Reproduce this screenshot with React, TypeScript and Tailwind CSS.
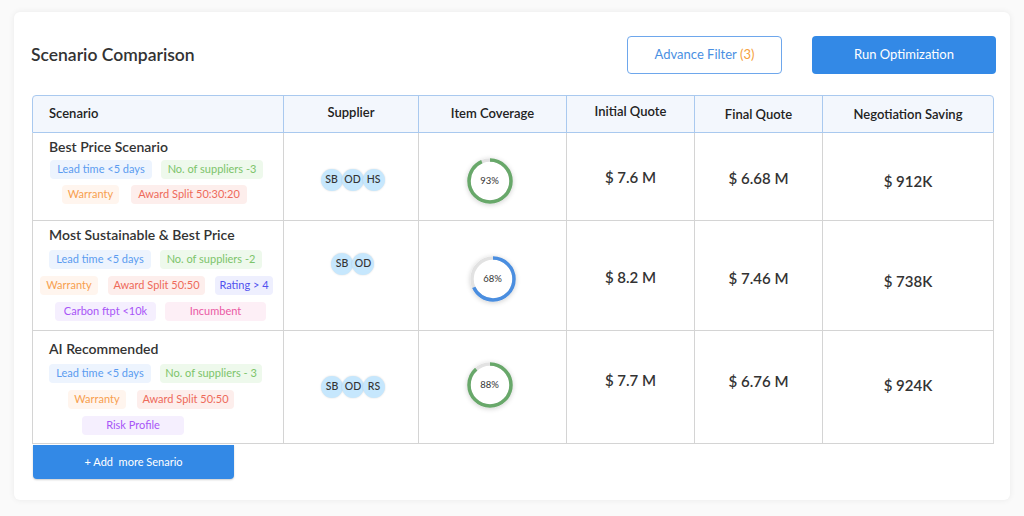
import React from "react";

type Tone = "blue" | "green" | "orange" | "red" | "indigo" | "purple" | "pink";

const toneCls: Record<Tone, string> = {
  blue: "bg-[#edf4fe] text-[#5b9cf0]",
  green: "bg-[#eef9ec] text-[#7cc46a]",
  orange: "bg-[#fff5ee] text-[#f7a04e]",
  red: "bg-[#fdeeec] text-[#ee6a5a]",
  indigo: "bg-[#eeeffe] text-[#5252ee]",
  purple: "bg-[#f5effe] text-[#a855f7]",
  pink: "bg-[#fdeff6] text-[#ea5aa4]",
};

type TagT = { t: string; tone: Tone; w: number };
type Line = { ml: number; gap: number; tags: TagT[] };

type Row = {
  title: string;
  h: number;
  titlePt: number;
  lineGap: number;
  firstGap: number;
  lines: Line[];
  sup: string[];
  supPt: number;
  supMl: number;
  pct: number;
  color: string;
  donutPt: number;
  donutMl: number;
  vals: string[];
  valPt: number[];
};

const rows: Row[] = [
  {
    title: "Best Price Scenario",
    h: 88,
    titlePt: 5,
    firstGap: 4,
    lineGap: 6,
    lines: [
      { ml: 17, gap: 9, tags: [{ t: "Lead time <5 days", tone: "blue", w: 102 }, { t: "No. of suppliers -3", tone: "green", w: 102 }] },
      { ml: 29, gap: 12, tags: [{ t: "Warranty", tone: "orange", w: 57 }, { t: "Award Split 50:30:20", tone: "red", w: 116 }] },
    ],
    sup: ["SB", "OD", "HS"],
    supPt: 36,
    supMl: 3,
    pct: 93,
    color: "#68a86a",
    donutPt: 25,
    donutMl: -6,
    vals: ["$ 7.6 M", "$ 6.68 M", "$ 912K"],
    valPt: [44, 45, 48],
  },
  {
    title: "Most Sustainable & Best Price",
    h: 110,
    titlePt: 5,
    firstGap: 6,
    lineGap: 7,
    lines: [
      { ml: 16, gap: 9, tags: [{ t: "Lead time <5 days", tone: "blue", w: 102 }, { t: "No. of suppliers -2", tone: "green", w: 102 }] },
      { ml: 7, gap: 10, tags: [{ t: "Warranty", tone: "orange", w: 58 }, { t: "Award Split 50:50", tone: "red", w: 97 }, { t: "Rating > 4", tone: "indigo", w: 58 }] },
      { ml: 22, gap: 9, tags: [{ t: "Carbon ftpt <10k", tone: "purple", w: 101 }, { t: "Incumbent", tone: "pink", w: 101 }] },
    ],
    sup: ["SB", "OD"],
    supPt: 32,
    supMl: 3,
    pct: 68,
    color: "#4a8ee0",
    donutPt: 35,
    donutMl: 0,
    vals: ["$ 8.2 M", "$ 7.46 M", "$ 738K"],
    valPt: [56, 57, 60],
  },
  {
    title: "AI Recommended",
    h: 113,
    titlePt: 9,
    firstGap: 6,
    lineGap: 7,
    lines: [
      { ml: 16, gap: 9, tags: [{ t: "Lead time <5 days", tone: "blue", w: 102 }, { t: "No. of suppliers - 3", tone: "green", w: 102 }] },
      { ml: 35, gap: 11, tags: [{ t: "Warranty", tone: "orange", w: 58 }, { t: "Award Split 50:50", tone: "red", w: 97 }] },
      { ml: 49, gap: 0, tags: [{ t: "Risk Profile", tone: "purple", w: 102 }] },
    ],
    sup: ["SB", "OD", "RS"],
    supPt: 45,
    supMl: 4,
    pct: 88,
    color: "#68a86a",
    donutPt: 31,
    donutMl: -6,
    vals: ["$ 7.7 M", "$ 6.76 M", "$ 924K"],
    valPt: [49, 50, 54],
  },
];

const COLS = "grid grid-cols-[250px_135px_148px_128px_128px_171px]";

function Donut({ pct, color }: { pct: number; color: string }) {
  const r = 21;
  const c = 2 * Math.PI * r;
  return (
    <div className="relative w-[46px] h-[46px] rounded-full bg-white shadow-[0_1px_5px_rgba(0,0,0,0.18)]">
      <svg width="46" height="46" viewBox="0 0 46 46" className="absolute inset-0">
        <circle cx="23" cy="23" r={r} fill="none" stroke="#e2e2e2" strokeWidth="3.5" />
        <circle
          cx="23"
          cy="23"
          r={r}
          fill="none"
          stroke={color}
          strokeWidth="3.5"
          strokeDasharray={`${(c * pct) / 100} ${c}`}
          transform="rotate(-90 23 23)"
        />
      </svg>
      <div className="absolute inset-0 flex items-center justify-center text-[9.5px] text-[#333]">{pct}%</div>
    </div>
  );
}

export default function App() {
  return (
    <div className="w-[1024px] h-[516px] bg-[#fafafa] pt-[12px] pl-[14px] font-['Lato','Liberation_Sans',sans-serif]">
      <div className="w-[996px] h-[488px] bg-white rounded-[6px] shadow-[0_0_6px_rgba(0,0,0,0.07)] pt-[24px] pl-[18px] pr-[15px]">
        <div className="flex items-center h-[38px]">
          <div className="text-[17.5px] font-semibold text-[#333] ml-[-1px] mt-[1px]">Scenario Comparison</div>
          <div className="ml-auto flex items-center gap-[30px]">
            <div className="w-[155px] h-[38px] rounded-[4px] border border-[#6ea7ec] flex items-center justify-center text-[13px] text-[#4a90e2]">
              Advance Filter&nbsp;<span className="text-[#f5a040]">(3)</span>
            </div>
            <div className="w-[184px] h-[38px] rounded-[4px] bg-[#3389e6] flex items-center justify-center text-[13px] text-white mr-[-1px]">
              Run Optimization
            </div>
          </div>
        </div>

        <div className="mt-[21px] w-[962px]">
          <div className={`${COLS} h-[38px] bg-[#f3f7fd] border border-[#a9c9ef] rounded-t-[4px] text-[13px] font-semibold text-[#222]`}>
            <div className="flex items-center pl-[16px]">Scenario</div>
            <div className="flex items-center justify-center border-l border-[#a9c9ef] pb-[2px]">Supplier</div>
            <div className="flex items-center justify-center border-l border-[#a9c9ef]">Item Coverage</div>
            <div className="flex items-center justify-center border-l border-[#a9c9ef] pb-[4px]">Initial Quote</div>
            <div className="flex items-center justify-center border-l border-[#a9c9ef] pt-[2px]">Final Quote</div>
            <div className="flex items-center justify-center border-l border-[#a9c9ef] pt-[2px]">Negotiation Saving</div>
          </div>
          <div className="border-l border-r border-[#d4d4d4]">
            {rows.map((r, i) => (
              <div key={i} className={`${COLS} border-b border-[#d4d4d4]`} style={{ height: r.h }}>
                <div style={{ paddingTop: r.titlePt }}>
                  <div className="pl-[16px] text-[14px] leading-[18px] font-semibold text-[#333]">{r.title}</div>
                  <div className="flex flex-col" style={{ marginTop: r.firstGap, rowGap: r.lineGap }}>
                    {r.lines.map((l, j) => (
                      <div key={j} className="flex" style={{ marginLeft: l.ml, columnGap: l.gap }}>
                        {l.tags.map((t, k) => (
                          <div
                            key={k}
                            className={`h-[19px] rounded-[4px] flex items-center justify-center text-[11px] whitespace-nowrap ${toneCls[t.tone]}`}
                            style={{ width: t.w }}
                          >
                            {t.t}
                          </div>
                        ))}
                      </div>
                    ))}
                  </div>
                </div>
                <div className="border-l border-[#d4d4d4] flex justify-center" style={{ paddingTop: r.supPt }}>
                  <div className="flex h-[22px]" style={{ marginLeft: r.supMl }}>
                    {r.sup.map((s, k) => (
                      <div
                        key={k}
                        className={`w-[22px] h-[22px] rounded-full bg-[#c6e7fd] flex items-center justify-center text-[10.5px] font-medium text-[#333] shadow-[0_0_2px_rgba(0,0,0,0.15)] ${k > 0 ? "-ml-[1px]" : ""}`}
                      >
                        {s}
                      </div>
                    ))}
                  </div>
                </div>
                <div className="border-l border-[#d4d4d4] flex justify-center" style={{ paddingTop: r.donutPt }}>
                  <div style={{ marginLeft: r.donutMl }}>
                    <Donut pct={r.pct} color={r.color} />
                  </div>
                </div>
                {r.vals.map((v, k) => (
                  <div
                    key={k}
                    className="border-l border-[#d4d4d4] flex justify-center text-[15px] leading-[20px] font-semibold text-[#333]"
                    style={{ paddingTop: r.valPt[k] - 10 }}
                  >
                    {v}
                  </div>
                ))}
              </div>
            ))}
          </div>
          <div className="mt-[1px] ml-[1px] w-[201px] h-[34px] bg-[#3389e6] rounded-b-[4px] shadow-[0_1px_2px_rgba(0,0,0,0.2)] flex items-center justify-center text-[11px] text-white whitespace-pre">
            {"+ Add  more Senario"}
          </div>
        </div>
      </div>
    </div>
  );
}
